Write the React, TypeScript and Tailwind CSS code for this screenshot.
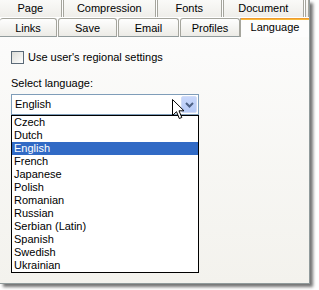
import { useState } from 'react'

interface Tab {
  label: string
  w: number
}

const backTabs: Tab[] = [
  { label: 'Page', w: 62 },
  { label: 'Compression', w: 94 },
  { label: 'Fonts', w: 65 },
  { label: 'Document', w: 82 },
  { label: '', w: 4 },
]

const frontTabs: Tab[] = [
  { label: 'Links', w: 57 },
  { label: 'Save', w: 59 },
  { label: 'Email', w: 61 },
  { label: 'Profiles', w: 60 },
]

const languages = [
  'Czech',
  'Dutch',
  'English',
  'French',
  'Japanese',
  'Polish',
  'Romanian',
  'Russian',
  'Serbian (Latin)',
  'Spanish',
  'Swedish',
  'Ukrainian',
]

function Cursor() {
  return (
    <svg width="13" height="21" viewBox="0 0 13 21" className="absolute left-[172px] top-[5px]">
      <path
        d="M0.5 0.5 L0.5 16.5 L4.5 12.7 L7.3 19.5 L9.8 18.5 L7 11.8 L12 11.8 Z"
        fill="#ffffff"
        stroke="#000000"
        strokeWidth="1"
        strokeLinejoin="miter"
      />
    </svg>
  )
}

export default function App() {
  const [selected, setSelected] = useState('English')
  const [regional, setRegional] = useState(false)

  return (
    <div
      className="w-[319px] h-[290px] bg-white overflow-hidden text-[11px] leading-[13px] text-black"
      style={{ fontFamily: '"Liberation Sans", Arial, sans-serif' }}
    >
      <div className="w-[310px] h-[284px] flex flex-col border-r border-b border-[#919b9c] bg-gradient-to-b from-[#fdfdfd] to-[#f3f2ed] shadow-[3px_3px_3px_rgba(0,0,0,0.55)]">
        {/* back row of tabs */}
        <div className="flex gap-px h-[18px] bg-white">
          {backTabs.map((t, i) => (
            <div
              key={i}
              className="h-[17px] flex items-end justify-center pb-[2px] border-x border-[#a5a59d] bg-gradient-to-b from-[#fafaf8] to-[#efeeea] first:border-l-0"
              style={{ width: t.w }}
            >
              {t.label}
            </div>
          ))}
        </div>

        {/* front row of tabs */}
        <div className="flex h-[19px]">
          <div className="flex gap-px">
            {frontTabs.map((t) => (
              <div
                key={t.label}
                className="h-[19px] flex items-center justify-center pt-px border-x border-t border-b border-x-[#a5a59d] border-t-[#a5a59d] border-b-[#919b9c] rounded-t-[3px] bg-gradient-to-b from-[#fefefe] to-[#ecebe6] first:border-l-0"
                style={{ width: t.w }}
              >
                {t.label}
              </div>
            ))}
          </div>
          <div className="w-[69px] h-[19px] flex flex-col border-l border-[#a5a59d] bg-[#fdfdfd]">
            <div className="h-[2px] bg-gradient-to-b from-[#e68b2c] to-[#ffc83c]" />
            <div className="flex-1 flex items-center justify-center pb-[3px]">Language</div>
          </div>
        </div>

        {/* content */}
        <div className="relative flex flex-col pl-[11px] pt-[14px]">
          <label className="flex items-center gap-[3px] h-[13px] cursor-default">
            <button
              type="button"
              onClick={() => setRegional(!regional)}
              className="w-[13px] h-[13px] border border-[#5b6a78] bg-gradient-to-br from-[#dcdcd7] to-[#ffffff]"
            />
            <span className="pl-px">Use user's regional settings</span>
          </label>

          <div className="mt-[13px] h-[13px]">Select language:</div>

          <div className="mt-[4px] w-[188px] h-[21px] flex items-center border border-[#7f9db9] bg-white">
            <span className="flex-1 pl-[3px]">{selected}</span>
            <div className="w-[16px] h-[17px] mr-px flex items-center justify-center rounded-[2px] border border-[#d2ddf7] bg-gradient-to-b from-[#c8d7fb] to-[#b6caf7]">
              <svg width="9" height="6" viewBox="0 0 9 6">
                <path d="M1 1 L4.5 4.5 L8 1" fill="none" stroke="#4d6185" strokeWidth="2" />
              </svg>
            </div>
          </div>

          <ul className="w-[188px] border border-black bg-white">
            {languages.map((lang) => (
              <li
                key={lang}
                onClick={() => setSelected(lang)}
                className={`h-[13px] pl-[2px] leading-[13px] ${
                  lang === selected ? 'bg-[#316ac5] text-white' : ''
                }`}
              >
                {lang}
              </li>
            ))}
          </ul>

          <div className="absolute left-0 top-[57px] w-0 h-0">
            <Cursor />
          </div>
        </div>
      </div>
    </div>
  )
}
